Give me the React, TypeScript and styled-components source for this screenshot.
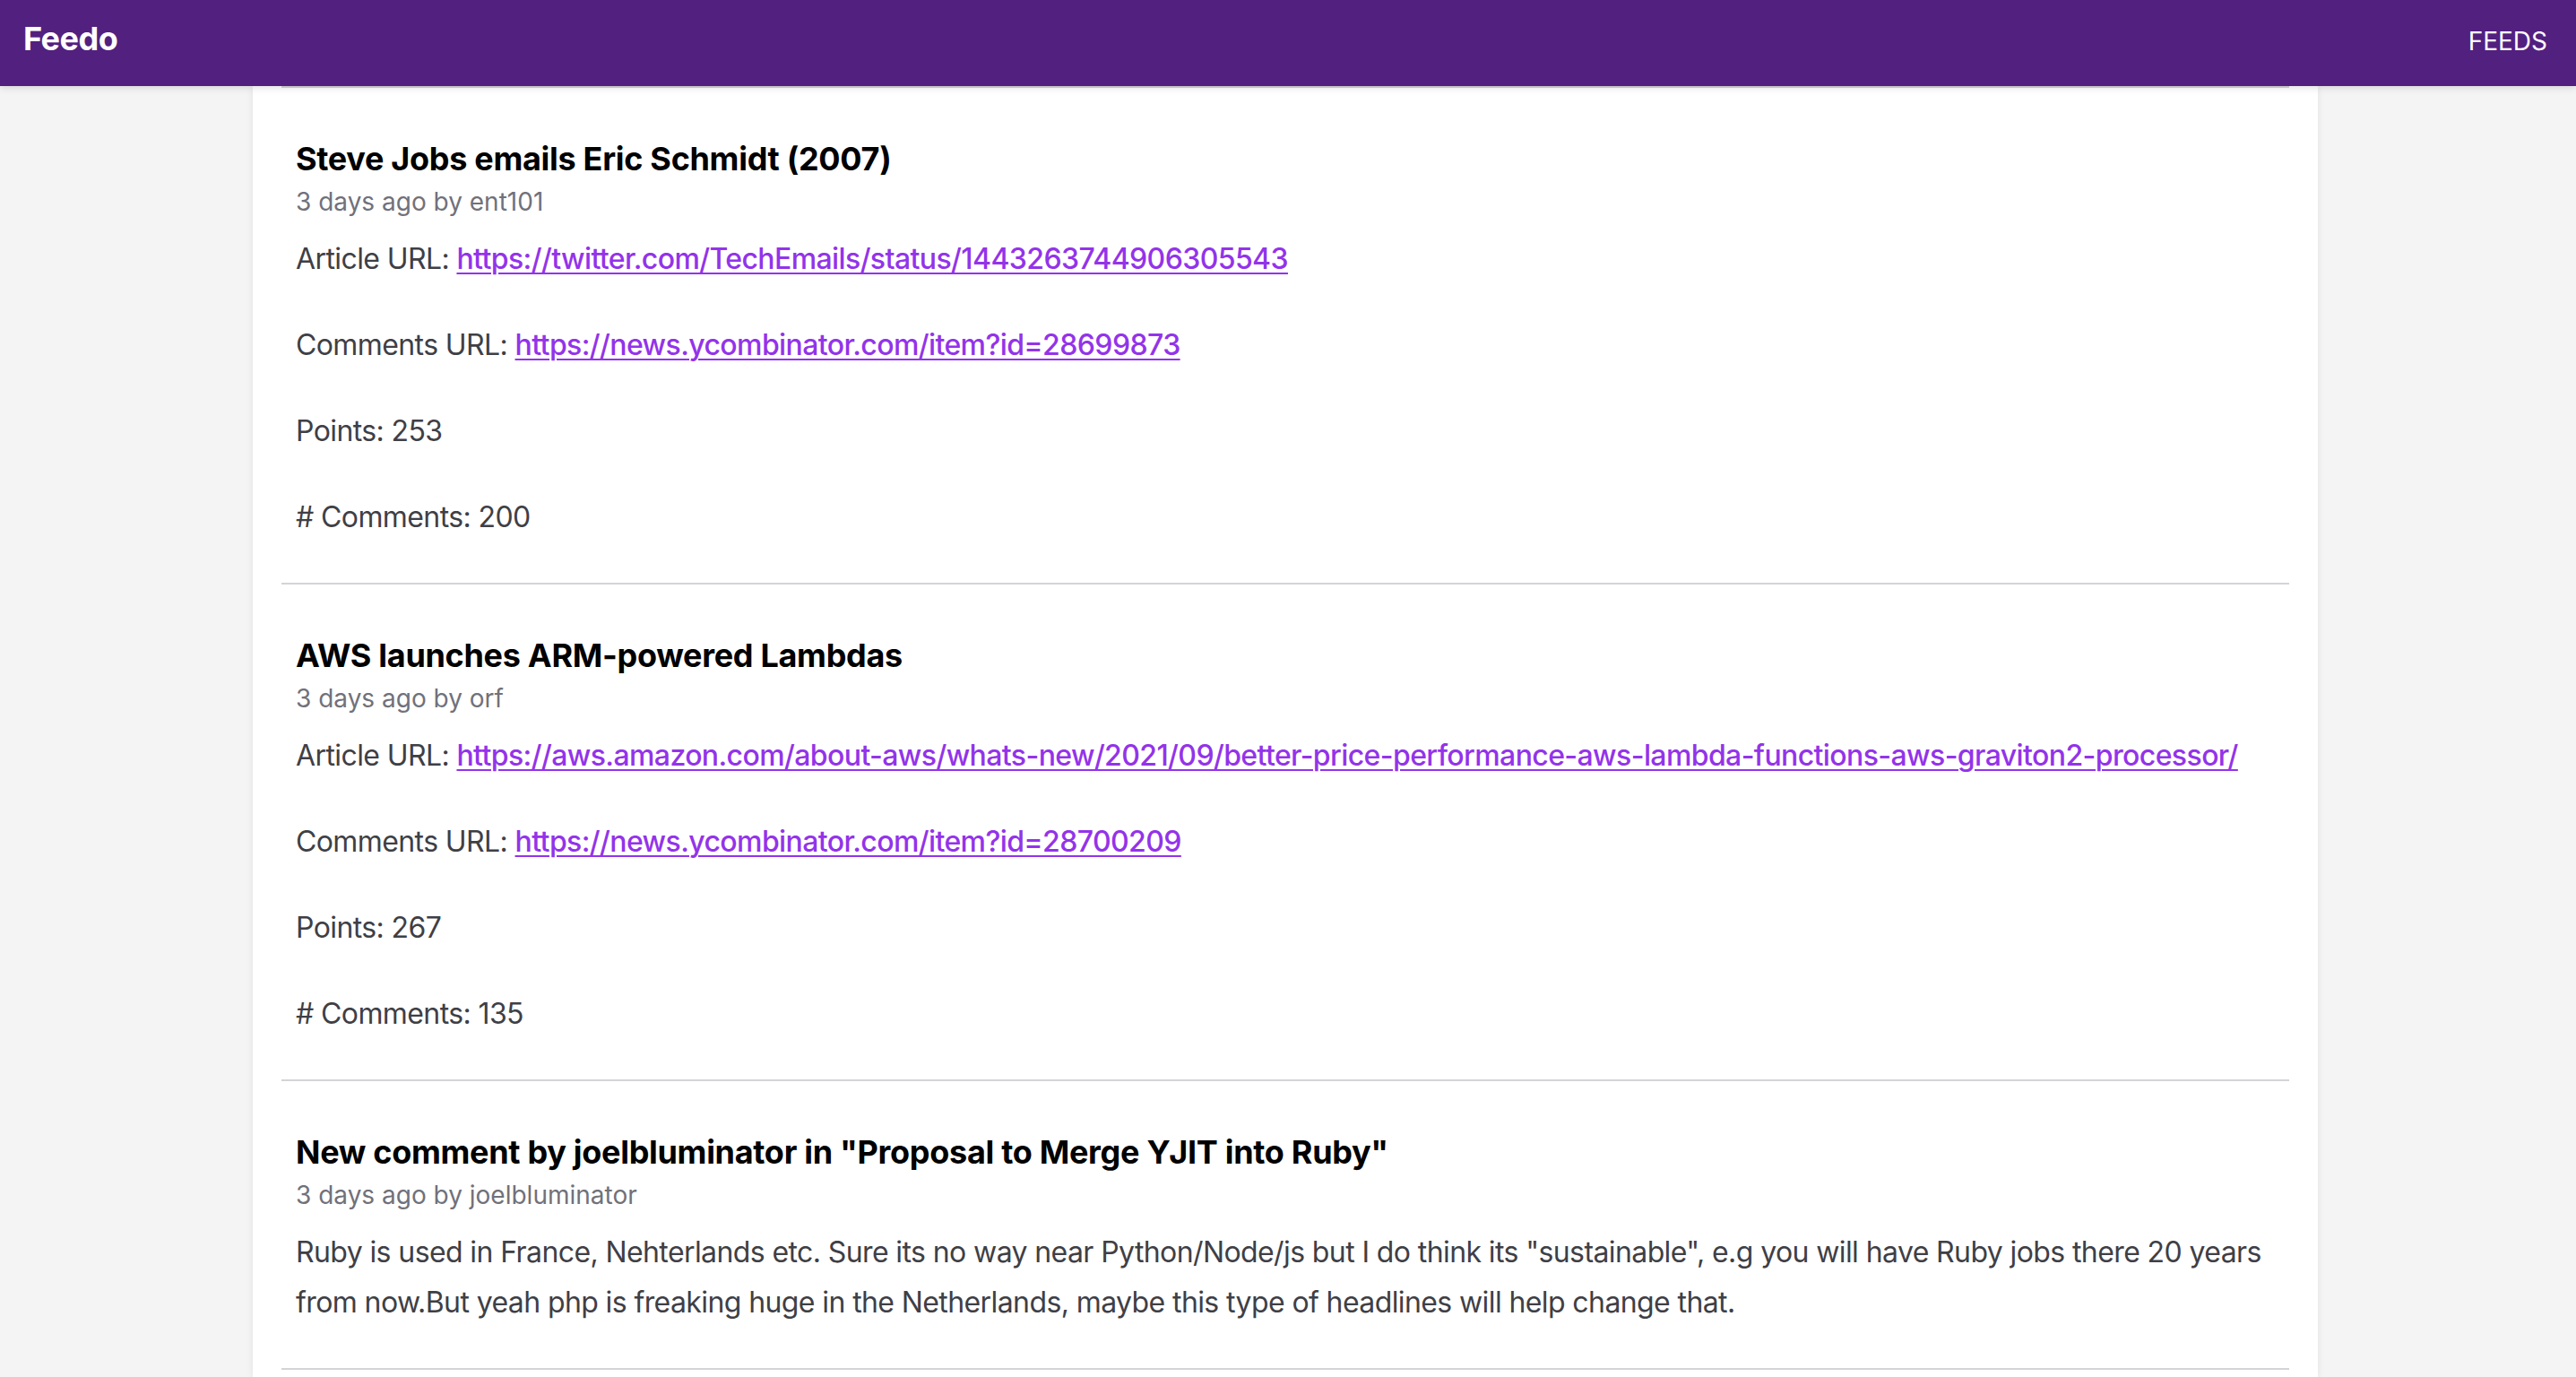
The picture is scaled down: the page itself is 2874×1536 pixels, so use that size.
import styled, { createGlobalStyle } from 'styled-components';

const GlobalStyle = createGlobalStyle`
  body {
    margin: 0;
    background: #f4f4f5;
    font-family: Inter, 'Noto Sans', 'Liberation Sans', sans-serif;
  }
`;

const Header = styled.header`
  height: 96px;
  box-sizing: border-box;
  padding: 21px 32px 0 26px;
  display: flex;
  align-items: baseline;
  justify-content: space-between;
  background: #52207f;
  color: #ffffff;
  box-shadow: 0 2px 8px rgba(0, 0, 0, 0.12);
  position: relative;
  z-index: 1;
`;

const Logo = styled.div`
  font-size: 36px;
  font-weight: 700;
  letter-spacing: -0.5px;
`;

const NavLink = styled.a`
  font-size: 28px;
  font-weight: 400;
  color: #ffffff;
  text-decoration: none;
  text-transform: uppercase;
`;

const Page = styled.div`
  padding-right: 6px;
`;

const Card = styled.main`
  width: 2304px;
  margin: 0 auto;
  min-height: calc(100vh - 96px);
  box-sizing: border-box;
  padding: 0 32px;
  background: #ffffff;
  box-shadow: 0 0 8px rgba(0, 0, 0, 0.08);
`;

const Item = styled.article`
  border-top: 2px solid #d4d4d8;
  padding: 51px 16px 45px;

  &:last-child {
    border-bottom: 2px solid #d4d4d8;
  }
`;

const Title = styled.h2`
  margin: 0;
  font-size: 36px;
  line-height: 56px;
  font-weight: 700;
  color: #000000;
  letter-spacing: -0.3px;
`;

const Meta = styled.div`
  font-size: 28px;
  line-height: 40px;
  color: #71717a;
`;

const Body = styled.div`
  margin-top: 16px;
  font-size: 32px;
  line-height: 56px;
  color: #3f3f46;
  letter-spacing: -0.6px;

  p {
    margin: 40px 0;
  }

  p:first-child {
    margin-top: 0;
  }

  p:last-child {
    margin-bottom: 0;
  }
`;

const Link = styled.a`
  color: #9333ea;
  font-weight: 500;
  text-decoration: underline;
  text-underline-offset: 4px;
  text-decoration-thickness: 2px;
`;

type Story = {
  title: string;
  author: string;
  articleUrl: string;
  commentsUrl: string;
  points: number;
  comments: number;
};

const stories: Story[] = [
  {
    title: 'Steve Jobs emails Eric Schmidt (2007)',
    author: 'ent101',
    articleUrl: 'https://twitter.com/TechEmails/status/1443263744906305543',
    commentsUrl: 'https://news.ycombinator.com/item?id=28699873',
    points: 253,
    comments: 200,
  },
  {
    title: 'AWS launches ARM-powered Lambdas',
    author: 'orf',
    articleUrl:
      'https://aws.amazon.com/about-aws/whats-new/2021/09/better-price-performance-aws-lambda-functions-aws-graviton2-processor/',
    commentsUrl: 'https://news.ycombinator.com/item?id=28700209',
    points: 267,
    comments: 135,
  },
];

export default function App() {
  return (
    <>
      <GlobalStyle />
      <Header>
        <Logo>Feedo</Logo>
        <NavLink href='#'>Feeds</NavLink>
      </Header>
      <Page>
        <Card>
          {stories.map((story) => (
            <Item key={story.commentsUrl}>
              <Title>{story.title}</Title>
              <Meta>3 days ago by {story.author}</Meta>
              <Body>
                <p>
                  Article URL: <Link href={story.articleUrl}>{story.articleUrl}</Link>
                </p>
                <p>
                  Comments URL: <Link href={story.commentsUrl}>{story.commentsUrl}</Link>
                </p>
                <p>Points: {story.points}</p>
                <p># Comments: {story.comments}</p>
              </Body>
            </Item>
          ))}
          <Item>
            <Title>New comment by joelbluminator in "Proposal to Merge YJIT into Ruby"</Title>
            <Meta>3 days ago by joelbluminator</Meta>
            <Body>
              <p>
                Ruby is used in France, Nehterlands etc. Sure its no way near Python/Node/js but I
                do think its "sustainable", e.g you will have Ruby jobs there 20 years from now.But
                yeah php is freaking huge in the Netherlands, maybe this type of headlines will help
                change that.
              </p>
            </Body>
          </Item>
        </Card>
      </Page>
    </>
  );
}
